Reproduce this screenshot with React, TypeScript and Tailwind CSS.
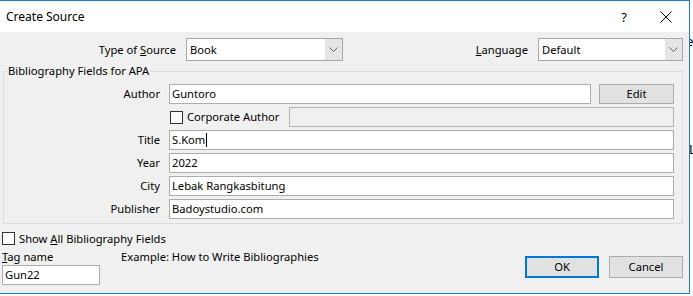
import React from "react";

function Chevron() {
  return (
    <svg width="9" height="5" viewBox="0 0 9 5">
      <path d="M0.5 0.5 L4.5 4.5 L8.5 0.5" fill="none" stroke="#606060" strokeWidth="1" />
    </svg>
  );
}

function Select({ value, className }: { value: string; className: string }) {
  return (
    <div className={"flex h-[23px] border border-[#a6a6a6] bg-white " + className}>
      <div className="flex-1 pl-[3px] flex items-center">{value}</div>
      <div className="w-[17px] bg-[#e5e5e5] flex items-center justify-center">
        <Chevron />
      </div>
    </div>
  );
}

function TextBox({ children, className = "" }: { children?: React.ReactNode; className?: string }) {
  return (
    <div className={"h-[20px] border border-[#adadad] bg-white flex items-center pl-[2px] " + className}>
      {children}
    </div>
  );
}

function Row({ label, children }: { label: string; children: React.ReactNode }) {
  return (
    <div className="flex items-center h-[20px]">
      <div className="w-[156px] text-right">{label}</div>
      <div className="ml-[9px] flex-1 flex items-center">{children}</div>
    </div>
  );
}

function CheckBox() {
  return <div className="w-[13px] h-[13px] border border-[#333333] bg-white shrink-0" />;
}

export default function App() {
  return (
    <div className="w-[693px] h-[296px] bg-white flex overflow-hidden font-['Noto_Sans',sans-serif] text-[11.2px] text-black leading-[16px]">
      <div className="w-[690px] h-[294px] border-t border-r border-b border-[#1a7fd4] flex flex-col bg-[#f0f0f0] shrink-0">
        {/* title bar */}
        <div className="h-[31px] bg-white flex items-center">
          <div className="ml-[6px] text-[12px]">Create Source</div>
          <div className="ml-auto mr-[33px] text-[13px]">?</div>
          <svg width="12" height="12" viewBox="0 0 12 12" className="mr-[17px]">
            <path d="M0.5 0.5 L11.5 11.5 M11.5 0.5 L0.5 11.5" stroke="#000" strokeWidth="1" />
          </svg>
        </div>
        {/* body */}
        <div className="flex-1 flex flex-col">
          <div className="flex items-center mt-[6px] mr-[6px]">
            <div className="w-[176px] text-right">
              Type of <span className="underline">S</span>ource
            </div>
            <Select value="Book" className="ml-[10px] w-[157px]" />
            <div className="ml-auto">
              <span className="underline">L</span>anguage
            </div>
            <Select value="Default" className="ml-[10px] w-[145px]" />
          </div>

          <fieldset className="ml-[3px] mt-[2px] w-[680px] border border-[#dcdcdc] pr-[8px] pt-[5px] pb-[4px] flex flex-col gap-[3px]">
            <legend className="ml-[3px] px-[1px]">Bibliography Fields for APA</legend>
            <Row label="Author">
              <TextBox className="w-[422px]">Guntoro</TextBox>
              <div className="ml-[8px] w-[75px] h-[20px] border border-[#adadad] bg-[#e1e1e1] flex items-center justify-center">
                Edit
              </div>
            </Row>
            <div className="flex items-center h-[20px]">
              <div className="ml-[166px]">
                <CheckBox />
              </div>
              <div className="ml-[4px]">Corporate Author</div>
              <div className="ml-auto w-[385px] h-[20px] border border-[#b4b4b4] bg-[#f0f0f0]" />
            </div>
            <Row label="Title">
              <TextBox className="flex-1">
                S.Kom<span className="inline-block w-px h-[14px] bg-black ml-[1px]" />
              </TextBox>
            </Row>
            <Row label="Year">
              <TextBox className="flex-1">2022</TextBox>
            </Row>
            <Row label="City">
              <TextBox className="flex-1">Lebak Rangkasbitung</TextBox>
            </Row>
            <Row label="Publisher">
              <TextBox className="flex-1">Badoystudio.com</TextBox>
            </Row>
          </fieldset>

          <div className="flex items-center mt-[8px] ml-[2px] h-[13px]">
            <CheckBox />
            <div className="ml-[4px]">
              Show <span className="underline">A</span>ll Bibliography Fields
            </div>
          </div>

          <div className="flex items-start mt-[4px] ml-[2px] mr-[6px]">
            <div className="flex flex-col w-[98px]">
              <div>
                <span className="underline">T</span>ag name
              </div>
              <TextBox className="w-[98px]">Gun22</TextBox>
            </div>
            <div className="ml-[21px]">Example: How to Write Bibliographies</div>
            <div className="ml-auto flex gap-[10px] mt-[7px]">
              <div className="w-[74px] h-[22px] border-2 border-[#0078d7] bg-[#e1e1e1] flex items-center justify-center">
                OK
              </div>
              <div className="w-[74px] h-[22px] border border-[#adadad] bg-[#e1e1e1] flex items-center justify-center">
                Cancel
              </div>
            </div>
          </div>
        </div>
      </div>
      <div className="flex-1 flex flex-col overflow-hidden text-[13px]">
        <div className="mt-[33px] -ml-[4px]">e</div>
        <div className="mt-[92px] -ml-[1px]">L</div>
      </div>
    </div>
  );
}
